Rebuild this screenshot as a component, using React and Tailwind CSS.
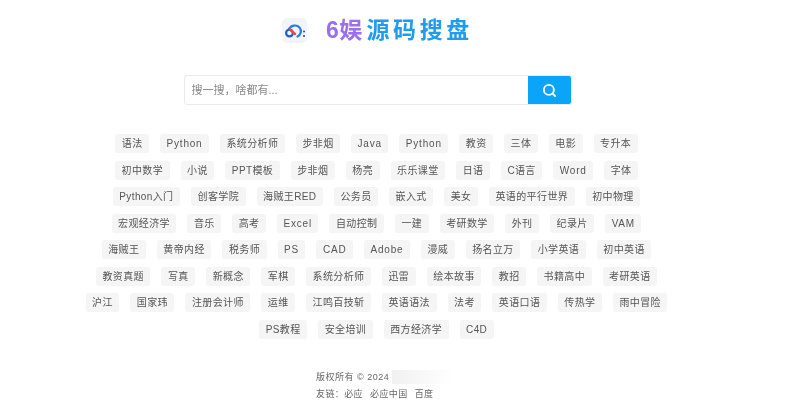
import React from 'react';
import { Search } from 'lucide-react';

const tagRows = [
  ['语法', 'Python', '系统分析师', '步非烟', 'Java', 'Python', '教资', '三体', '电影', '专升本'],
  ['初中数学', '小说', 'PPT模板', '步非烟', '杨亮', '乐乐课堂', '日语', 'C语言', 'Word', '字体'],
  ['Python入门', '创客学院', '海贼王RED', '公务员', '嵌入式', '美女', '英语的平行世界', '初中物理'],
  ['宏观经济学', '音乐', '高考', 'Excel', '自动控制', '一建', '考研数学', '外刊', '纪录片', 'VAM'],
  ['海贼王', '黄帝内经', '税务师', 'PS', 'CAD', 'Adobe', '漫威', '扬名立万', '小学英语', '初中英语'],
  ['教资真题', '写真', '新概念', '军棋', '系统分析师', '迅雷', '绘本故事', '教招', '书籍高中', '考研英语'],
  ['沪江', '国家玮', '注册会计师', '运维', '江鸣百技斩', '英语语法', '法考', '英语口语', '传热学', '雨中冒险'],
  ['PS教程', '安全培训', '西方经济学', 'C4D'],
];

const Logo = () => (
  <div className="flex h-[25px] w-[25px] items-center justify-center rounded-[5px] bg-[#f1f4f8]">
    <svg width="25" height="25" viewBox="0 0 25 25" fill="none">
      <path d="M7 11.5C8.5 7.5 14.5 6 17.5 9.5C20 12.5 19 17 15.5 18.5" stroke="#2a7de1" strokeWidth="2.2" strokeLinecap="round" />
      <circle cx="7.5" cy="15" r="3.4" stroke="#1f5fc4" strokeWidth="2.2" />
      <path d="M8 11.5L13 16" stroke="#e8484d" strokeWidth="2.4" strokeLinecap="round" />
      <circle cx="22" cy="13.5" r="1" fill="#1d4f91" />
      <circle cx="22" cy="18" r="1" fill="#1d4f91" />
    </svg>
  </div>
);

export default function App() {
  return (
    <div className="min-h-[412px] w-[799px] overflow-hidden bg-white font-['Liberation_Sans','Noto_Sans_CJK_SC',sans-serif] blur-[0.4px]">
      <div className="w-[755px]">
        <header className="flex items-center justify-center pt-[16px]">
          <Logo />
          <h1 className="ml-[19px] flex text-[23px] leading-[28px] font-bold">
            <span className="tracking-[0.3px] text-[#9a70ee]">6娱</span>
            <span className="ml-[4px] tracking-[3.6px] text-[#1f9bf0]">源码搜盘</span>
          </h1>
        </header>

        <div className="mt-[31px] flex justify-center">
          <div className="flex h-[30px] w-[388px] overflow-hidden rounded-[3px] border border-[#e9e9e9]">
            <div className="flex flex-1 items-center pl-[7px] text-[11px] text-[#888]">搜一搜，啥都有...</div>
            <button className="flex w-[43px] items-center justify-center bg-[#0aa5f8] text-white">
              <Search size={15} strokeWidth={3} />
            </button>
          </div>
        </div>

        <div className="mt-[29px] flex flex-col items-center gap-[7.5px] pr-[2px]">
          {tagRows.map((row, i) => (
            <div key={i} className="flex gap-[11px]">
              {row.map((tag, j) => (
                <span
                  key={j}
                  className={`flex h-[19px] items-center rounded-[3px] bg-[#f5f5f5] px-[6.5px] text-[10px] whitespace-nowrap text-[#555] ${
                    /^[A-Za-z]+$/.test(tag) ? 'tracking-[0.8px]' : 'tracking-[0.38px]'
                  }`}
                >
                  {tag}
                </span>
              ))}
            </div>
          ))}
        </div>

        <footer className="mt-[30px] flex flex-col pl-[316px] text-[9px] leading-[17px] text-[#666]">
          <div className="flex items-center">
            <span className="tracking-[0.5px]">版权所有 © 2024</span>
            <span className="ml-[3px] h-[14px] w-[62px] bg-gradient-to-r from-[#f1f1f1] to-white" />
          </div>
          <div className="flex gap-[7px] tracking-[0.4px]">
            <span>友链：必应</span>
            <span>必应中国</span>
            <span>百度</span>
          </div>
        </footer>
      </div>
    </div>
  );
}
